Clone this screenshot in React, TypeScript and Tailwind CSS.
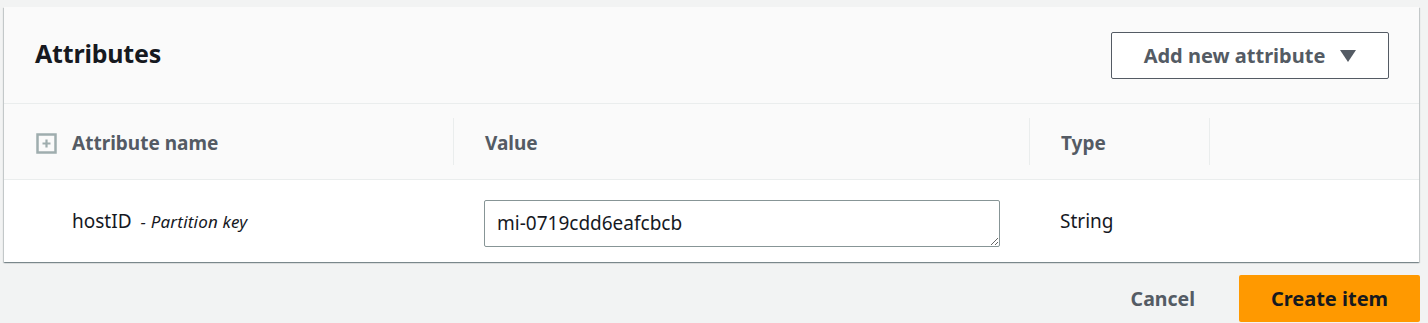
import { useState } from 'react'

const FONT = { fontFamily: '"Noto Sans", "Open Sans", Arial, sans-serif' }

function ExpandIcon() {
  return (
    <svg width="21" height="21" viewBox="0 0 21 21" className="shrink-0">
      <rect x="1.5" y="1.5" width="18" height="18" fill="none" stroke="#9fadae" strokeWidth="2.5" />
      <path d="M10.5 6.5v8M6.5 10.5h8" stroke="#9fadae" strokeWidth="2.2" />
    </svg>
  )
}

export default function App() {
  const [value, setValue] = useState('mi-0719cdd6eafcbcb')

  return (
    <div className="w-[1428px] h-[323px] bg-[#f2f3f3] overflow-hidden" style={FONT}>
      <div className="pt-[7px] pl-[4px] pr-[9px]">
        {/* Card */}
        <div className="bg-white shadow-[0_1px_1px_0_rgba(0,28,36,0.3),1px_1px_1px_0_rgba(0,28,36,0.15),-1px_1px_1px_0_rgba(0,28,36,0.15)]">
          <div className="h-[97px] bg-[#fafafa] border-b border-[#eaeded] flex items-center justify-between pl-[31px] pr-[30px]">
            <h2 className="text-[25px] font-bold text-[#16191f] tracking-[-0.2px] -mt-[2px]">Attributes</h2>
            <button className="h-[47px] w-[278px] mt-[1px] border border-[#545b64] rounded-[2px] bg-white flex items-center justify-center gap-[15px] text-[20px] font-bold text-[#545b64]">
              <span>Add new attribute</span>
              <svg width="16" height="12" viewBox="0 0 16 12">
                <path d="M0 0h16L8 12z" fill="#545b64" />
              </svg>
            </button>
          </div>

          {/* Table header */}
          <div className="h-[76px] bg-[#fafafa] border-b border-[#eaeded] grid grid-cols-[449px_576px_180px_1fr] text-[19px] font-bold text-[#545b64]">
            <div className="flex items-center gap-[15px] pl-[32px] pt-[3px]">
              <ExpandIcon />
              <span>Attribute name</span>
            </div>
            <div className="flex items-center pl-[31px] pt-[3px] border-l border-[#eaeded] my-[14px]">Value</div>
            <div className="flex items-center pl-[31px] pt-[3px] border-l border-[#eaeded] my-[14px]">Type</div>
            <div className="border-l border-[#eaeded] my-[14px]" />
          </div>

          {/* Row */}
          <div className="h-[82px] grid grid-cols-[449px_576px_180px_1fr] items-center text-[19px] text-[#16191f]">
            <div className="pl-[68px] flex items-baseline gap-[9px]">
              <span>hostID</span>
              <span className="text-[17px] italic tracking-[0.2px]">- Partition key</span>
            </div>
            <div className="pl-[31px]">
              <textarea
                value={value}
                onChange={(e) => setValue(e.target.value)}
                rows={1}
                className="block w-[516px] h-[47px] mt-[4px] border border-[#879596] rounded-[2px] px-[12px] py-[9px] text-[19px] leading-[26px] text-[#16191f] bg-white outline-none resize"
                style={FONT}
              />
            </div>
            <div className="pl-[31px]">String</div>
            <div />
          </div>
        </div>
      </div>

      {/* Footer actions */}
      <div className="flex justify-end items-center gap-[44px] pr-[8px] mt-[13px]">
        <button className="text-[19.5px] font-bold text-[#545b64]">Cancel</button>
        <button className="h-[47px] w-[181px] rounded-[2px] bg-[#ff9900] text-[20px] font-bold text-[#16191f]">Create item</button>
      </div>
    </div>
  )
}
